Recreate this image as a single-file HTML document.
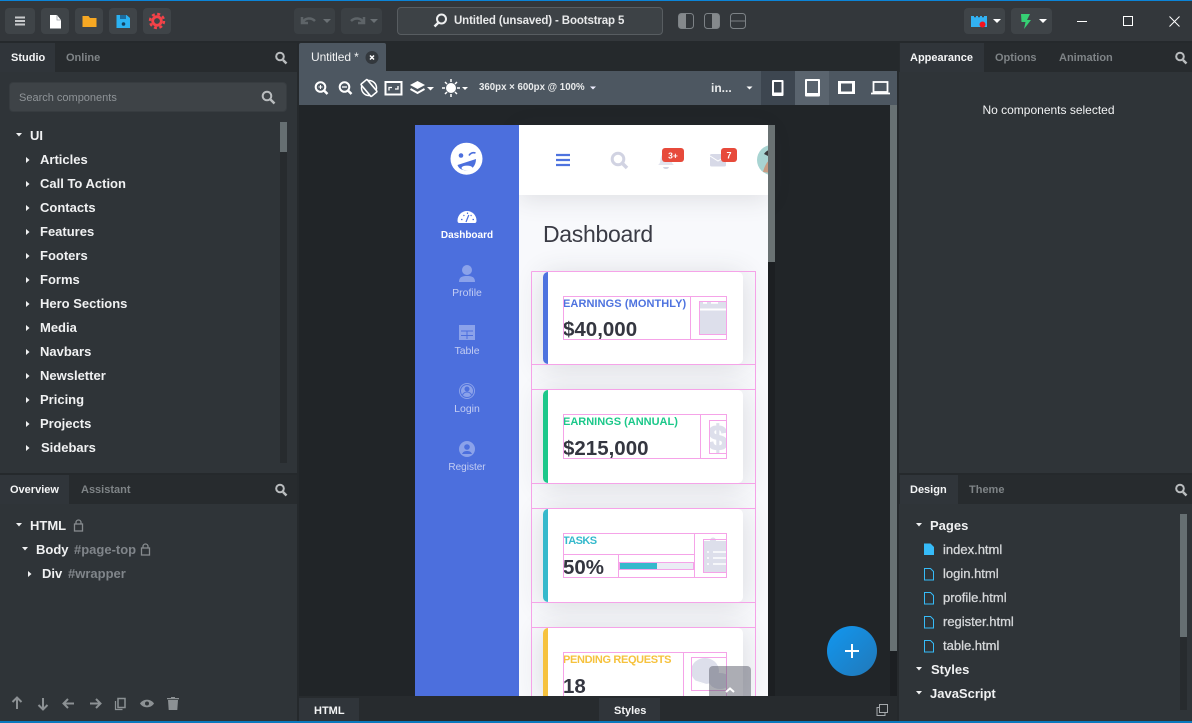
<!DOCTYPE html>
<html><head><meta charset="utf-8"><title>Bootstrap Studio</title>
<style>
html,body{margin:0;padding:0;width:1192px;height:723px;overflow:hidden;background:#25292c;font-family:"Liberation Sans",sans-serif}
div{position:absolute;box-sizing:border-box}
.t{position:absolute;white-space:nowrap;line-height:16px;height:16px}
.b{font-weight:bold;font-size:13px;color:#f0f1f2}
.tab{font-weight:bold;font-size:11px;color:#7f8487}
.tact{color:#f4f5f6}
.btn{background:#3f4448;border-radius:4px;top:8px;height:26px}
.f{font-size:13px;color:#d5d7d9;-webkit-text-stroke:.3px #d5d7d9}
.card{left:543px;width:200px;background:#fff;border-radius:5px;box-shadow:0 3px 28px rgba(58,59,69,.16)}
.bar{left:543px;width:5px;border-radius:5px 0 0 5px}
.cl{font:bold 11px "Liberation Sans",sans-serif;line-height:14px;height:14px;position:absolute;white-space:nowrap;left:563px}
.cv{font:bold 20.5px "Liberation Sans",sans-serif;line-height:24px;height:24px;position:absolute;white-space:nowrap;left:563px;color:#343640}
.nav{position:absolute;left:415px;width:104px;text-align:center;font-size:10.5px;line-height:14px;color:#c3cdf3}
</style></head><body>
<!-- top bar -->
<div style="left:0;top:0;width:1192px;height:41px;background:#33373b"></div>
<div style="left:0;top:0;width:1192px;height:1px;background:#0b84d8"></div>
<div style="left:0;top:41px;width:1192px;height:2px;background:#25292c"></div>
<div class="btn" style="left:5px;width:30px"></div>
<div class="btn" style="left:41px;width:28px"></div>
<div class="btn" style="left:75px;width:28px"></div>
<div class="btn" style="left:109px;width:28px"></div>
<div class="btn" style="left:143px;width:28px"></div>
<div class="btn" style="left:294px;width:41px;background:#3b4044"></div>
<div class="btn" style="left:341px;width:41px;background:#3b4044"></div>
<div style="left:397px;top:7px;width:266px;height:28px;background:#3d4246;border:1px solid #585d61;border-radius:4px"></div>
<div class="t" style="left:454px;top:13px;font-size:11.5px;font-weight:bold;color:#e8e9ea;letter-spacing:-.13px">Untitled (unsaved) - Bootstrap 5</div>
<div class="btn" style="left:964px;width:41px"></div>
<div class="btn" style="left:1011px;width:41px"></div>

<!-- left panel -->
<div style="left:0;top:43px;width:297px;height:430px;background:#2f3438"></div>
<div style="left:0;top:43px;width:297px;height:29px;background:#272b2e"></div>
<div style="left:0;top:43px;width:55px;height:29px;background:#30353a"></div>
<div class="t tab tact" style="left:11px;top:50px">Studio</div>
<div class="t tab" style="left:66px;top:50px;font-size:11px">Online</div>
<div style="left:9px;top:82px;width:278px;height:30px;background:#3e4347;border:1px solid #373c40;border-radius:4px"></div>
<div class="t" style="left:19px;top:90px;font-size:11px;color:#8f9498">Search components</div>
<div style="left:280px;top:122px;width:7px;height:341px;background:#272b2e"></div>
<div style="left:280px;top:122px;width:7px;height:30px;background:#666f72"></div>
<div class="t b" style="left:30px;top:128px">UI</div>
<div class="t b" style="left:40px;top:152px">Articles</div>
<div class="t b" style="left:40px;top:176px">Call To Action</div>
<div class="t b" style="left:40px;top:200px">Contacts</div>
<div class="t b" style="left:40px;top:224px">Features</div>
<div class="t b" style="left:40px;top:248px">Footers</div>
<div class="t b" style="left:40px;top:272px">Forms</div>
<div class="t b" style="left:40px;top:296px">Hero Sections</div>
<div class="t b" style="left:40px;top:320px">Media</div>
<div class="t b" style="left:40px;top:344px">Navbars</div>
<div class="t b" style="left:40px;top:368px">Newsletter</div>
<div class="t b" style="left:40px;top:392px">Pricing</div>
<div class="t b" style="left:40px;top:416px">Projects</div>
<div class="t b" style="left:41px;top:440px">Sidebars</div>

<div style="left:0;top:473px;width:297px;height:2px;background:#25292c"></div>
<div style="left:0;top:475px;width:297px;height:246px;background:#2f3438"></div>
<div style="left:0;top:475px;width:297px;height:29px;background:#272b2e"></div>
<div style="left:0;top:475px;width:69px;height:29px;background:#30353a"></div>
<div class="t tab tact" style="left:10px;top:482px">Overview</div>
<div class="t tab" style="left:81px;top:482px">Assistant</div>
<div class="t b" style="left:30px;top:518px">HTML</div>
<div class="t b" style="left:36px;top:542px">Body</div>
<div class="t" style="left:74px;top:542px;font-size:13px;font-weight:bold;color:#80858a">#page-top</div>
<div class="t b" style="left:42px;top:566px">Div</div>
<div class="t" style="left:68px;top:566px;font-size:13px;font-weight:bold;color:#80858a">#wrapper</div>

<!-- centre -->
<div style="left:297px;top:43px;width:602px;height:680px;background:#25292c"></div>
<div style="left:299px;top:43px;width:87px;height:29px;background:#4d5761;border-radius:2px 2px 0 0"></div>
<div class="t" style="left:311px;top:49px;font-size:12px;color:#f1f2f3;letter-spacing:-.1px">Untitled *</div>
<div style="left:299px;top:71px;width:598px;height:34px;background:#4d5761"></div>
<div style="left:761px;top:71px;width:34px;height:34px;background:#3d4650"></div>
<div style="left:795px;top:71px;width:34px;height:34px;background:#5a646e"></div>
<div class="t" style="left:479px;top:80px;font-size:9.7px;font-weight:bold;color:#e9ebec">360px × 600px @ 100%</div>
<div class="t" style="left:711px;top:80px;font-size:12px;font-weight:bold;color:#e9ebec">in...</div>
<div style="left:299px;top:105px;width:598px;height:591px;background:#212528"></div>
<div style="left:890px;top:105px;width:7px;height:591px;background:#1c1f22"></div>
<div style="left:890px;top:105px;width:7px;height:546px;background:#687173"></div>

<!-- phone -->
<div style="left:415px;top:125px;width:353px;height:571px;overflow:hidden;background:#f8f9fc"></div>
<div style="left:519px;top:125px;width:249px;height:70px;background:#fff;box-shadow:0 5px 22px rgba(58,59,69,.13)"></div>
<div style="left:415px;top:125px;width:104px;height:571px;background:#4c6fdd"></div>
<div style="left:768px;top:125px;width:7px;height:571px;background:#1c1f22"></div>
<div style="left:768px;top:125px;width:7px;height:137px;background:#6a7273"></div>
<div class="nav" style="top:229px;font-weight:bold;font-size:10px;color:#fff">Dashboard</div>
<div class="nav" style="top:286px">Profile</div>
<div class="nav" style="top:344px">Table</div>
<div class="nav" style="top:402px">Login</div>
<div class="nav" style="top:461px;font-size:10px">Register</div>
<div class="t" style="left:543px;top:218px;height:32px;line-height:32px;font-size:23px;color:#3a3b45;letter-spacing:-.3px">Dashboard</div>

<div class="card" style="top:272px;height:92px"></div>
<div class="bar" style="top:272px;height:92px;background:#4e73df"></div>
<div class="card" style="top:390px;height:93px"></div>
<div class="bar" style="top:390px;height:93px;background:#1cc88a"></div>
<div class="card" style="top:509px;height:93px"></div>
<div class="bar" style="top:509px;height:93px;background:#36b9cc"></div>
<div class="card" style="top:628px;height:68px;border-radius:5px 5px 0 0"></div>
<div class="bar" style="top:628px;height:68px;background:#f6c23e;border-radius:5px 0 0 0"></div>

<div class="cl" style="top:297px;color:#4e73df;letter-spacing:.08px">EARNINGS (MONTHLY)</div>
<div class="cv" style="top:318px">$40,000</div>
<div class="cl" style="top:415px;color:#1cc88a">EARNINGS (ANNUAL)</div>
<div class="cv" style="top:437px">$215,000</div>
<div class="cl" style="top:534px;color:#36b9cc;letter-spacing:-.6px">TASKS</div>
<div class="cv" style="top:556px">50%</div>
<div class="cl" style="top:653px;color:#f6c23e;letter-spacing:-.35px">PENDING REQUESTS</div>
<div class="cv" style="top:675px">18</div>
<div style="left:619px;top:562px;width:75px;height:8px;background:#eaecf4"></div>
<div style="left:620px;top:563px;width:37px;height:6px;background:#36b9cc"></div>

<!-- phone icons + outlines -->
<svg style="position:absolute;left:0;top:0" width="1192" height="723" viewBox="0 0 1192 723">
<defs><clipPath id="ph"><rect x="415" y="125" width="353" height="571"/></clipPath>
<clipPath id="ic2"><rect x="709" y="420" width="18" height="34"/></clipPath>
<clipPath id="ic3"><rect x="703" y="537" width="24" height="36"/></clipPath>
<clipPath id="ic4"><rect x="691" y="657" width="36" height="34"/></clipPath>
<linearGradient id="fab" x1="0" y1="0" x2="1" y2="1"><stop offset="0" stop-color="#1197f0"/><stop offset="1" stop-color="#2178b8"/></linearGradient></defs>
<g clip-path="url(#ph)">
<!-- logo -->
<circle cx="466.500" cy="158.700" r="16" fill="#fff"/>
<circle cx="461" cy="155.500" r="2.300" fill="#4c6fdd"/>
<path d="M469 155.500c1-2 3.500-3.500 6.500-2.500" stroke="#4c6fdd" stroke-width="1.600" fill="none"/>
<path d="M457.500 165L476 159c0 6.500-4 11-9.500 11.300-4.500.2-8-2-9-5.300z" fill="#4c6fdd"/>
<ellipse cx="467" cy="168" rx="5.500" ry="2.400" fill="#fff"/>
<!-- hamburger -->
<path d="M556 155h14M556 160h14M556 165h14" stroke="#4e73df" stroke-width="2.200"/>
<!-- search -->
<circle cx="618" cy="159" r="5.800" fill="none" stroke="#d1d3e2" stroke-width="3"/><path d="M622 163l5 5" stroke="#d1d3e2" stroke-width="3.500"/>
<!-- bell -->
<path d="M658 165c3-2 2-5 3-8 1-3 3-4 5-4s4 1 5 4c1 3 0 6 3 8z" fill="#e2e4ee"/><path d="M663 167h6c-.5 1.500-1.500 2-3 2s-2.500-.5-3-2z" fill="#d1d3e2"/>
<rect x="662" y="148" width="22" height="14" rx="3" fill="#e74a3b"/>
<text x="673" y="158.500" font-family="Liberation Sans" font-size="8.500" font-weight="bold" fill="#fff" text-anchor="middle">3+</text>
<!-- mail -->
<rect x="710" y="154" width="16" height="12.500" rx="1.500" fill="#d7d9e7"/><path d="M710 156l8 5 8-5" stroke="#fff" stroke-width="1" fill="none"/>
<rect x="721" y="148" width="16" height="14" rx="3" fill="#e74a3b"/>
<text x="729" y="158.700" font-family="Liberation Sans" font-size="9" font-weight="bold" fill="#fff" text-anchor="middle">7</text>
<!-- avatar -->
<circle cx="772" cy="160" r="15" fill="#a8d4d2"/><path d="M763 172c2-8 6-14 12-14s6 8 4 16z" fill="#c79c83"/><path d="M764 154c3-5 10-6 14-3l-4 8z" fill="#3b3a3c"/>
<!-- sidebar icons -->
<path d="M459.500 223c-1.500 0-2-1-2-2.500a9.500 9.500 0 0 1 19 0c0 1.500-.5 2.500-2 2.500z" fill="#fff"/>
<path d="M461 219.500h1.500M463.500 215l.8 1M467.500 212.500v1.500M471.500 215l-.8 1M472.500 219.500H474M466 222l2.800-7" stroke="#4c6fdd" stroke-width="1.200"/>
<g fill="#8ba2ea">
<circle cx="467" cy="270" r="5"/><path d="M459 282c0-5 3-6 8-6s8 1 8 6z"/>
<path d="M459 325h16v15h-16z"/>
<circle cx="467" cy="391" r="8"/>
<circle cx="467" cy="449" r="8"/>
</g>
<path d="M461 331h12M461 335.500h12M467 331v8" stroke="#4c6fdd" stroke-width="1"/>
<circle cx="467" cy="389" r="2.500" fill="#4c6fdd"/><path d="M462.500 395c1-2 2-3 4.500-3s3.500 1 4.500 3" stroke="#4c6fdd" stroke-width="1" fill="none"/>
<circle cx="467" cy="391" r="6.500" fill="none" stroke="#4c6fdd" stroke-width="1"/>
<circle cx="467" cy="447" r="2.800" fill="#4c6fdd"/><path d="M462 454c1-2 2-3 5-3s4 1 5 3z" fill="#4c6fdd"/>
<!-- card icons -->
<path d="M699 301h28v33h-28z" fill="#dddfeb"/><path d="M699 309.500h28" stroke="#fff" stroke-width="2"/><path d="M703 302.500h4M711 302.500h7" stroke="#fff" stroke-width="2.500"/>
<g clip-path="url(#ic2)"><text x="708" y="450" font-family="Liberation Sans" font-size="35" font-weight="bold" fill="#dddfeb" stroke="#dddfeb" stroke-width="1.200">$</text></g>
<g clip-path="url(#ic3)"><path d="M704 541h25v31h-25z" fill="#dddfeb"/><circle cx="713" cy="540.500" r="3" fill="#dddfeb"/>
<path d="M707 552h2M713 552h14M707 558h2M713 558h14M707 564h2M713 564h14" stroke="#fff" stroke-width="1.500"/></g>
<g clip-path="url(#ic4)"><ellipse cx="705" cy="671" rx="14" ry="13" fill="#dddfeb"/><ellipse cx="720" cy="681" rx="11" ry="8" fill="#dddfeb"/><path d="M692 680l16 5" stroke="#fff" stroke-width="1"/></g>
<!-- pink outlines -->
<g fill="none" stroke="#f5a3e8" stroke-width="1">
<path d="M531.500 271.500h224v425M531.500 271.500v425"/>
<path d="M531.500 364.500h224M531.500 389.500h224M531.500 483.500h224M531.500 508.500h224M531.500 602.500h224M531.500 627.500h224"/>
<rect x="563.500" y="296.500" width="163" height="43"/><path d="M690.500 296.500v43"/><rect x="699.500" y="301.500" width="27" height="33"/>
<rect x="563.500" y="414.500" width="163" height="44"/><path d="M700.500 414.500v44"/><rect x="709.500" y="420.500" width="17" height="33"/>
<rect x="563.500" y="533.500" width="163" height="44"/><path d="M694.500 533.500v44M563.500 554.500h131M618.500 554.500v23"/><rect x="703.500" y="539.500" width="23" height="33"/>
<rect x="619.500" y="562.500" width="74" height="7"/>
<rect x="563.500" y="652.500" width="163" height="50"/><path d="M683.500 652.500v50"/><rect x="691.500" y="657.500" width="35" height="33"/>
</g>
<!-- back to top -->
<rect x="709" y="666" width="42" height="40" rx="4" fill="#5a5c69" fill-opacity=".5"/>
<path d="M726 692l4-3.500 4 3.500" stroke="#fff" stroke-width="2" fill="none"/>
</g>

<!-- toolbar icons -->
<path d="M15 17.500h10M15 21h10M15 24.500h10" stroke="#c8cacc" stroke-width="2"/>
<path d="M50 15h7l4 5v8.500h-11z" fill="#fff"/><path d="M57 15v5h4" fill="none" stroke="#9aa0a5" stroke-width=".8"/>
<path d="M82.500 16h6l1.500 2h6.500v9h-14z" fill="#f7a823"/>
<path d="M116.500 15h10l3.500 3v10h-13.500z" fill="#2bb2f2"/><rect x="120" y="15" width="6" height="4" fill="#1c6da0"/><circle cx="123.500" cy="24" r="1.800" fill="#12405f"/>
<g transform="translate(157 21)"><circle r="7" fill="none" stroke="#f44248" stroke-width="2.400" stroke-dasharray="3 2.500"/><circle r="4.300" fill="none" stroke="#f44248" stroke-width="2.800"/></g>
<path d="M303 22c2-4 8-5 12-1M302 17v6h6" stroke="#5e6468" stroke-width="2.500" fill="none"/><path d="M323 19h8l-4 4z" fill="#6a7074"/>
<path d="M363 22c-2-4-8-5-12-1M364 17v6h-6" stroke="#5e6468" stroke-width="2.500" fill="none"/><path d="M370 19h8l-4 4z" fill="#6a7074"/>
<circle cx="441.500" cy="19" r="4.500" fill="none" stroke="#eeeff0" stroke-width="2"/><path d="M438.500 22.500l-4 4" stroke="#eeeff0" stroke-width="2.500"/>
<rect x="678.500" y="13.500" width="15" height="15" rx="3" fill="none" stroke="#7d8286"/><path d="M681 14h5v14h-5a2 2 0 0 1-2-2V16a2 2 0 0 1 2-2z" fill="#85898c"/>
<rect x="704.500" y="13.500" width="15" height="15" rx="3" fill="none" stroke="#7d8286"/><path d="M712 14h5a2 2 0 0 1 2 2v10a2 2 0 0 1-2 2h-5z" fill="#85898c"/>
<rect x="730.500" y="13.500" width="15" height="15" rx="3" fill="none" stroke="#7d8286"/><path d="M731 21h14" stroke="#7d8286"/>
<path d="M971 16h16v11h-16z" fill="#32b2f3"/><path d="M974 16.500h2M978 16.500h2M982 16.500h2" stroke="#3f4448" stroke-width="1.500"/><circle cx="982.500" cy="24.500" r="3" fill="#f5121d"/><path d="M993 19h8l-4 4z" fill="#fff"/>
<path d="M1021 14h9l-3 6h4l-7 9 1.500-7h-4z" fill="#36d074"/><path d="M1039 19h8l-4 4z" fill="#fff"/>
<path d="M1077 21.500h10" stroke="#fff"/><rect x="1123.500" y="16.500" width="9" height="9" fill="none" stroke="#fff"/><path d="M1169.500 16.500l10 10M1179.500 16.500l-10 10" stroke="#fff"/>
<!-- panel search icons -->
<g fill="none" stroke="#b9bcbe">
<g stroke-width="2"><circle cx="280" cy="56.500" r="3.800"/><path d="M283 60l3.500 3.500" stroke-width="2.500"/></g>
<g stroke-width="2"><circle cx="267" cy="96" r="4.300"/><path d="M270.500 99.500l4 4" stroke-width="2.500"/></g>
<g stroke-width="2"><circle cx="280" cy="488.500" r="3.800"/><path d="M283 492l3.500 3.500" stroke-width="2.500"/></g>
</g>
<!-- tab close -->
<circle cx="372" cy="57.500" r="6.500" fill="#33383d"/><path d="M370 55.500l4 4M374 55.500l-4 4" stroke="#fff" stroke-width="1.500"/>
<!-- canvas toolbar -->
<g fill="none" stroke="#fff">
<g stroke-width="2"><circle cx="320.500" cy="87" r="4.800"/><path d="M324 90.500l3.500 3.500" stroke-width="2.500"/><path d="M318.500 87h4M320.500 85v4" stroke-width="1"/></g>
<g stroke-width="2"><circle cx="344.500" cy="87" r="4.800"/><path d="M348 90.500l3.500 3.500" stroke-width="2.500"/><path d="M342 87h5" stroke-width="1.300"/></g>
<circle cx="369" cy="88" r="7.500" stroke-width="1.500"/><rect x="-4" y="-8" width="8" height="16" rx="1" transform="translate(369 88) rotate(-40)" stroke-width="1.600" fill="#4d5761"/>
<rect x="385.500" y="82" width="16" height="12.500" stroke-width="2"/><path d="M389 90.500v-3h3M398 86v3h-3" stroke-width="1.300"/>
</g>
<path d="M417.500 81l7.500 4-7.500 4-7.500-4z" fill="#fff"/><path d="M410.500 89l7 4 7-4" stroke="#fff" stroke-width="2" fill="none"/><path d="M427 87h7l-3.500 3.500z" fill="#fff"/>
<circle cx="451" cy="88" r="5" fill="#fff"/><path d="M451 79v3M451 94v3M442 88h3M457 88h3M445 82l2 2M455 92l2 2M457 82l-2 2M447 92l-2 2" stroke="#fff" stroke-width="1.500"/><path d="M462 87h6l-3 3z" fill="#fff"/>
<path d="M590 86.500h6l-3 3z" fill="#eef"/><path d="M746.500 86.500h6l-3 3z" fill="#fff"/>
<rect x="772" y="80" width="11.500" height="16" rx="1" fill="#fff"/><rect x="774" y="82" width="7.500" height="10.500" fill="#3d4650"/>
<rect x="805" y="79" width="15" height="17.500" rx="1" fill="#fff"/><rect x="807" y="81" width="11" height="12" fill="#5a646e"/>
<rect x="838" y="81" width="17" height="13" fill="#fff"/><rect x="841" y="83.500" width="11" height="8" fill="#4d5761"/>
<rect x="873.500" y="82" width="14" height="10" fill="none" stroke="#fff" stroke-width="1.800"/><path d="M871 93.500h19" stroke="#fff" stroke-width="1.800"/>
<!-- tree arrows -->
<g fill="#f0f1f2">
<path d="M16 133h6l-3 3.500z"/>
<path d="M26 157v6l3.500-3z"/><path d="M26 181v6l3.500-3z"/><path d="M26 205v6l3.500-3z"/><path d="M26 229v6l3.500-3z"/><path d="M26 253v6l3.500-3z"/><path d="M26 277v6l3.500-3z"/><path d="M26 301v6l3.500-3z"/><path d="M26 325v6l3.500-3z"/><path d="M26 349v6l3.500-3z"/><path d="M26 373v6l3.500-3z"/><path d="M26 397v6l3.500-3z"/><path d="M26 421v6l3.500-3z"/><path d="M26 445v6l3.500-3z"/>
<path d="M16 523h6l-3 3.500z"/><path d="M22 547h6l-3 3.500z"/><path d="M28 571v6l3.500-3z"/>
</g>
<!-- locks -->
<g fill="none" stroke="#868b8e" stroke-width="1.300"><rect x="74.500" y="524" width="8" height="7"/><path d="M76 524v-1.500a2.500 2.500 0 0 1 5 0V524"/><rect x="141.500" y="548" width="8" height="7"/><path d="M143 548v-1.500a2.500 2.500 0 0 1 5 0V548"/></g>
<!-- overview bottom -->
<g stroke="#8c9194" stroke-width="2" fill="none">
<path d="M17 709v-11M12.500 702l4.500-4.500 4.500 4.500"/><path d="M43 698v11M38.500 705l4.500 4.500 4.500-4.500"/><path d="M74 703.500H64M68 699l-4.500 4.500L68 708"/><path d="M90 703.500h10M96 699l4.500 4.500L96 708"/>
<rect x="118" y="698.500" width="7" height="9" stroke-width="1.500"/><path d="M115.500 701v8.500h7" stroke-width="1.200"/>
</g>
<path d="M140 703.500c3-5 11-5 14 0-3 5-11 5-14 0z" fill="#8c9194"/><circle cx="147" cy="703.500" r="2" fill="#2f3438"/>
<path d="M168 700h10l-.7 10h-8.600zM167 698h12v1.200h-12zM171 697h4v1h-4z" fill="#8c9194"/>
</svg>

<!-- bottom tabs -->
<div style="left:299px;top:696px;width:598px;height:25px;background:#272b2e"></div>
<div style="left:299px;top:698px;width:60px;height:23px;background:#30353a"></div>
<div style="left:599px;top:698px;width:61px;height:23px;background:#30353a"></div>
<div class="t tab tact" style="left:314px;top:703px">HTML</div>
<div class="t tab tact" style="left:614px;top:703px">Styles</div>

<!-- right panel -->
<div style="left:899px;top:43px;width:293px;height:678px;background:#2f3438"></div>
<div style="left:899px;top:43px;width:293px;height:29px;background:#272b2e"></div>
<div style="left:900px;top:43px;width:84px;height:29px;background:#30353a"></div>
<div class="t tab tact" style="left:910px;top:50px">Appearance</div>
<div class="t tab" style="left:995px;top:50px">Options</div>
<div class="t tab" style="left:1059px;top:50px">Animation</div>
<div class="t" style="left:902px;width:293px;text-align:center;top:102px;font-size:12px;color:#f2f3f4">No components selected</div>
<div style="left:899px;top:473px;width:293px;height:2px;background:#25292c"></div>
<div style="left:899px;top:475px;width:293px;height:29px;background:#272b2e"></div>
<div style="left:900px;top:475px;width:58px;height:29px;background:#30353a"></div>
<div class="t tab tact" style="left:910px;top:482px">Design</div>
<div class="t tab" style="left:969px;top:482px">Theme</div>
<div style="left:1180px;top:514px;width:7px;height:196px;background:#272b2e"></div>
<div style="left:1180px;top:514px;width:7px;height:123px;background:#666f72"></div>
<div class="t b" style="left:930px;top:518px">Pages</div>
<div class="t f" style="left:943px;top:542px">index.html</div>
<div class="t f" style="left:943px;top:566px">login.html</div>
<div class="t f" style="left:943px;top:590px">profile.html</div>
<div class="t f" style="left:943px;top:614px">register.html</div>
<div class="t f" style="left:943px;top:638px">table.html</div>
<div class="t b" style="left:931px;top:662px">Styles</div>
<div class="t b" style="left:930px;top:686px">JavaScript</div>
<div style="left:0;top:721px;width:1192px;height:2px;background:#0a78bd"></div>

<svg style="position:absolute;left:0;top:0" width="1192" height="723" viewBox="0 0 1192 723">
<g fill="none" stroke="#b9bcbe">
<g stroke-width="2"><circle cx="1180" cy="56.500" r="3.800"/><path d="M1183 60l3.500 3.500" stroke-width="2.500"/></g>
<g stroke-width="2"><circle cx="1180" cy="488.500" r="3.800"/><path d="M1183 492l3.500 3.500" stroke-width="2.500"/></g>
</g>
<g fill="#f0f1f2"><path d="M916 523h6l-3 3.500z"/><path d="M916 667h6l-3 3.500z"/><path d="M916 691h6l-3 3.500z"/></g>
<path d="M924 543.500h6.500l3.500 3.500v8h-10z" fill="#36bbf8"/>
<g fill="none" stroke="#36bbf8"><path d="M924.500 568.500h6l3 3v8.500h-9z"/><path d="M924.500 592.500h6l3 3v8.500h-9z"/><path d="M924.500 616.500h6l3 3v8.500h-9z"/><path d="M924.500 640.500h6l3 3v8.500h-9z"/></g>
<circle cx="852" cy="651" r="25" fill="url(#fab)"/><path d="M852 644v14M845 651h14" stroke="#fff" stroke-width="2"/>
<g fill="none" stroke="#a5a9ac"><rect x="879.500" y="704.500" width="8" height="8"/><path d="M879.500 707.500h-2.500v8h8v-3"/></g>
</svg>
</body></html>
